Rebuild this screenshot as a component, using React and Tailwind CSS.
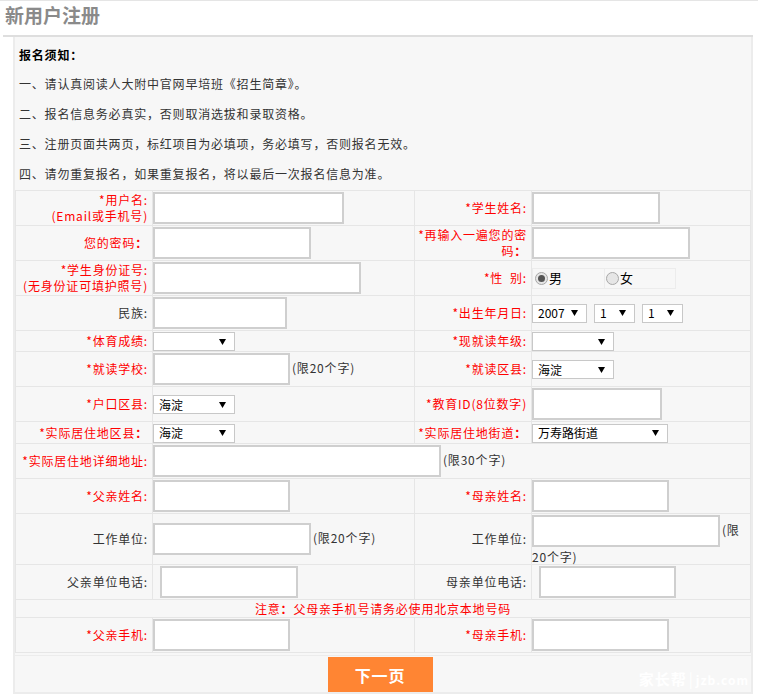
import React from 'react';

const FONT = { fontFamily: '"Noto Sans CJK SC", "Liberation Sans", sans-serif' };

function TextInput({ className = '' }) {
  return (
    <input
      type="text"
      className={`h-[32px] border-2 border-[#cfcfcf] bg-white align-middle outline-none ${className}`}
    />
  );
}

function Select({ value = '', className = '' }) {
  return (
    <div
      className={`inline-flex h-[19px] items-center justify-between border border-[#c8c8c8] bg-white pl-[5px] pr-[8px] align-middle text-[12px] tracking-normal text-black ${className}`}
    >
      <span>{value}</span>
      <svg width="7" height="6" viewBox="0 0 7 6">
        <path d="M0 0 H7 L3.5 6 Z" fill="#000" />
      </svg>
    </div>
  );
}

function Radio({ checked }) {
  return (
    <span className="inline-flex h-[13px] w-[13px] items-center justify-center rounded-full border border-[#a8a8a8] bg-[#e6e6e6]">
      {checked && <span className="h-[7px] w-[7px] rounded-full bg-[#555]" />}
    </span>
  );
}

function Label({ children, red = true }) {
  return (
    <td className={`border border-[#e6e6e6] pr-[4px] text-right align-middle text-[12px] leading-[16px] ${red ? 'text-[#f00]' : 'text-[#333]'}`}>
      {children}
    </td>
  );
}

function Field({ children, colSpan }) {
  return (
    <td colSpan={colSpan} className="border border-[#e6e6e6] align-middle text-[12px] text-[#333]">
      {children}
    </td>
  );
}

// fullwidth colon that shows heavier in the original
const Colon = () => <span className="font-bold">：</span>;

const notices = [
  '一、请认真阅读人大附中官网早培班《招生简章》。',
  '二、报名信息务必真实，否则取消选拔和录取资格。',
  '三、注册页面共两页，标红项目为必填项，务必填写，否则报名无效。',
  '四、请勿重复报名，如果重复报名，将以最后一次报名信息为准。',
];

export default function App() {
  return (
    <div className="min-h-[699px] w-[758px] border-t border-[#e5e5e5] bg-white tracking-[0.8px]" style={FONT}>
      {/* Title */}
      <div className="h-[34px] pl-[5px] pt-[1px]">
        <h1 className="text-[19px] font-bold leading-[26px] tracking-[0px] text-[#8a8a8a]">新用户注册</h1>
      </div>
      <div className="ml-[3px] mr-[5px] h-[2px] bg-[#dedede]" />

      {/* Panel */}
      <div className="ml-[13px] w-[740px] border-x-2 border-b-2 border-[#ececec] bg-[#f7f7f7]">
        <div className="pl-[4px] pt-[4px] text-[12px] text-[#333]">
          <p className="h-[28px] leading-[28px] font-bold text-black">报名须知：</p>
          {notices.map((n) => (
            <p key={n} className="h-[30px] leading-[30px]">
              {n}
            </p>
          ))}
        </div>

        <table className="mt-[1px] w-[735px] table-fixed border-collapse">
          <colgroup>
            <col className="w-[137px]" />
            <col className="w-[262px]" />
            <col className="w-[117px]" />
            <col className="w-[219px]" />
          </colgroup>
          <tbody>
            <tr className="h-[35px]">
              <Label>
                *用户名:
                <br />
                (Email或手机号)
              </Label>
              <Field>
                <TextInput className="w-[191px]" />
              </Field>
              <Label>*学生姓名:</Label>
              <Field>
                <TextInput className="w-[128px]" />
              </Field>
            </tr>
            <tr className="h-[35px]">
              <Label>
                您的密码<Colon />
              </Label>
              <Field>
                <TextInput className="w-[158px]" />
              </Field>
              <Label>
                *再输入一遍您的密
                <br />
                码<Colon />
              </Label>
              <Field>
                <TextInput className="w-[158px]" />
              </Field>
            </tr>
            <tr className="h-[35px]">
              <Label>
                *学生身份证号:
                <br />
                (无身份证可填护照号)
              </Label>
              <Field>
                <TextInput className="w-[208px]" />
              </Field>
              <Label>*性&nbsp;&nbsp;别:</Label>
              <Field>
                <div className="flex h-[21px] w-[144px] border border-[#ececec] text-[13px] text-black">
                  <div className="flex w-[72px] items-center gap-[1px] border-r border-[#ececec] pl-[2px]">
                    <Radio checked />
                    <span>男</span>
                  </div>
                  <div className="flex flex-1 items-center gap-[1px] pl-[1px]">
                    <Radio />
                    <span>女</span>
                  </div>
                </div>
              </Field>
            </tr>
            <tr className="h-[35px]">
              <Label red={false}>民族:</Label>
              <Field>
                <TextInput className="w-[134px]" />
              </Field>
              <Label>*出生年月日:</Label>
              <Field>
                <div className="flex items-center gap-[7px]">
                  <Select value="2007" className="w-[55px]" />
                  <Select value="1" className="w-[41px]" />
                  <Select value="1" className="w-[41px]" />
                </div>
              </Field>
            </tr>
            <tr className="h-[21px]">
              <Label>*体育成绩:</Label>
              <Field>
                <Select className="w-[82px]" />
              </Field>
              <Label>*现就读年级:</Label>
              <Field>
                <Select className="w-[82px]" />
              </Field>
            </tr>
            <tr className="h-[35px]">
              <Label>*就读学校:</Label>
              <Field>
                <TextInput className="w-[137px]" />
                <span className="ml-[2px]">(限20个字)</span>
              </Field>
              <Label>*就读区县:</Label>
              <Field>
                <Select value="海淀" className="w-[82px]" />
              </Field>
            </tr>
            <tr className="h-[35px]">
              <Label>*户口区县:</Label>
              <Field>
                <Select value="海淀" className="w-[82px]" />
              </Field>
              <Label>*教育ID(8位数字)</Label>
              <Field>
                <TextInput className="w-[130px]" />
              </Field>
            </tr>
            <tr className="h-[22px]">
              <Label>
                *实际居住地区县<Colon />
              </Label>
              <Field>
                <Select value="海淀" className="w-[82px]" />
              </Field>
              <Label>
                *实际居住地街道<Colon />
              </Label>
              <Field>
                <Select value="万寿路街道" className="w-[136px]" />
              </Field>
            </tr>
            <tr className="h-[35px]">
              <Label>*实际居住地详细地址:</Label>
              <Field colSpan={3}>
                <TextInput className="w-[288px]" />
                <span className="ml-[2px]">(限30个字)</span>
              </Field>
            </tr>
            <tr className="h-[35px]">
              <Label>*父亲姓名:</Label>
              <Field>
                <TextInput className="w-[137px]" />
              </Field>
              <Label>*母亲姓名:</Label>
              <Field>
                <TextInput className="w-[137px]" />
              </Field>
            </tr>
            <tr className="h-[50px]">
              <Label red={false}>工作单位:</Label>
              <Field>
                <TextInput className="w-[158px]" />
                <span className="ml-[2px]">(限20个字)</span>
              </Field>
              <Label red={false}>工作单位:</Label>
              <td className="border border-[#e6e6e6] align-top text-[12px] leading-[15px] text-[#333]">
                <div className="flex items-start pt-[1px]">
                  <TextInput className="w-[188px]" />
                  <span className="ml-[2px] pt-[7px]">(限</span>
                </div>
                <div className="mt-[2px]">20个字)</div>
              </td>
            </tr>
            <tr className="h-[35px]">
              <Label red={false}>父亲单位电话:</Label>
              <Field>
                <TextInput className="ml-[7px] w-[138px]" />
              </Field>
              <Label red={false}>母亲单位电话:</Label>
              <Field>
                <TextInput className="ml-[7px] w-[137px]" />
              </Field>
            </tr>
            <tr className="h-[18px]">
              <td colSpan={4} className="border border-[#e6e6e6] text-center align-middle text-[12px] leading-[16px] text-[#f00]">
                注意<Colon />父母亲手机号请务必使用北京本地号码
              </td>
            </tr>
            <tr className="h-[35px]">
              <Label>*父亲手机:</Label>
              <Field>
                <TextInput className="w-[137px]" />
              </Field>
              <Label>*母亲手机:</Label>
              <Field>
                <TextInput className="w-[137px]" />
              </Field>
            </tr>
          </tbody>
        </table>

        {/* Submit row */}
        <div className="relative mt-[2px] flex h-[37px] justify-center border-t border-[#ececec] pt-[1px]">
          <button
            type="button"
            className="ml-[-6px] h-[35px] w-[105px] bg-[#ff8533] text-[16px] font-bold text-white"
          >
            下一页
          </button>
          <span className="absolute bottom-[2px] right-[2px] text-[15px] font-bold tracking-[1px] text-white">
            家长帮<span className="mx-[2px] font-normal">|</span>
            <span className="text-[12px]">jzb.com</span>
          </span>
        </div>
      </div>
    </div>
  );
}
